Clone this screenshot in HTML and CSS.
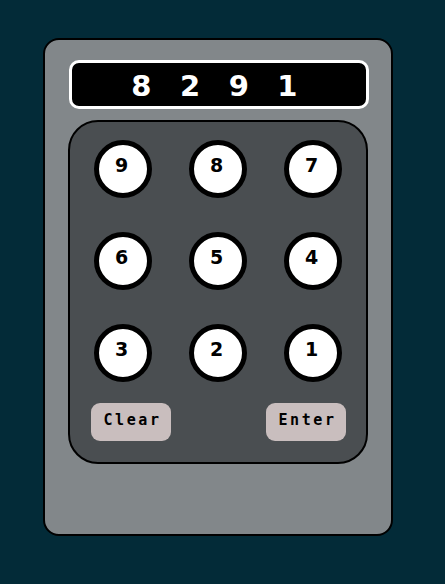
FILE: index.html
```html
<!DOCTYPE html>
<html lang="en">
<head>
<meta charset="utf-8">
<title>Keypad</title>
<link rel="stylesheet" href="styles.css">
</head>
<body>
<div class="case">
  <div class="display"><span class="code">8 2 9 1</span></div>
  <div class="pad">
    <div class="keys">
      <button class="key">9</button>
      <button class="key">8</button>
      <button class="key">7</button>
      <button class="key">6</button>
      <button class="key">5</button>
      <button class="key">4</button>
      <button class="key">3</button>
      <button class="key">2</button>
      <button class="key">1</button>
    </div>
    <div class="actions">
      <button class="action">Clear</button>
      <button class="action">Enter</button>
    </div>
  </div>
</div>
</body>
</html>
```
FILE: styles.css
```css
html, body {
  margin: 0;
  padding: 0;
}
body {
  background: #032b38;
  width: 445px;
  height: 584px;
  overflow: hidden;
  font-family: "DejaVu Sans Mono", "Liberation Mono", monospace;
  font-weight: bold;
}
.case {
  box-sizing: border-box;
  margin: 38px 0 0 43px;
  width: 350px;
  height: 498px;
  border: 2px solid #000;
  border-radius: 16px;
  background: #82878a;
  padding: 20px 23px;
}
.display {
  box-sizing: border-box;
  width: 300px;
  height: 49px;
  margin-left: 1px;
  border: 3px solid #fff;
  border-radius: 10px;
  background: #000;
  display: flex;
  align-items: center;
  justify-content: center;
}
.code {
  color: #fff;
  font-family: "DejaVu Sans", "Verdana", sans-serif;
  font-size: 29px;
  letter-spacing: 9.2px;
  line-height: 1;
  padding-left: 0;
  padding-top: 3px;
}
.pad {
  box-sizing: border-box;
  margin-top: 11px;
  width: 300px;
  height: 344px;
  border: 2px solid #000;
  border-radius: 30px;
  background: #4a4e51;
  padding: 18px 0 0;
}
.keys {
  display: grid;
  grid-template-columns: repeat(3, 95px);
  justify-content: center;
  row-gap: 34px;
}
.key {
  justify-self: center;
  box-sizing: border-box;
  width: 58px;
  height: 58px;
  border: 5px solid #000;
  border-radius: 50%;
  background: #fff;
  color: #000;
  font-family: "DejaVu Sans", "Verdana", sans-serif;
  font-weight: bold;
  font-size: 19px;
  line-height: 1;
  padding: 0 3px 8px 0;
  margin: 0;
  display: flex;
  align-items: center;
  justify-content: center;
}
.actions {
  display: flex;
  justify-content: space-between;
  padding: 0 20px 0 21px;
  margin-top: 21px;
}
.action {
  box-sizing: border-box;
  width: 80px;
  height: 38px;
  border: none;
  border-radius: 9px;
  background: #c9bebe;
  color: #000;
  font-family: inherit;
  font-weight: bold;
  font-size: 15px;
  letter-spacing: 2.6px;
  padding: 0 0 3px 3px;
  margin: 0;
  line-height: 1;
}
```
